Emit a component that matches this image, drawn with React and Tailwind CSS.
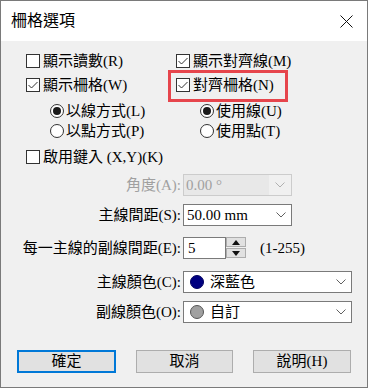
import React from 'react';

const font = { fontFamily: '"Liberation Serif", "Noto Sans CJK TC", serif' };

const Check = ({ checked }) => (
    <span className="w-[14px] h-[14px] border border-[#333] bg-white flex items-center justify-center shrink-0">
        {checked && (
            <svg width="12" height="12" viewBox="0 0 12 12">
                <path d="M1.5 6 L4.5 9 L10.5 3" fill="none" stroke="#333" strokeWidth="1" />
            </svg>
        )}
    </span>
);

const Radio = ({ checked }) => (
    <span className="w-[14px] h-[14px] rounded-full border border-[#333] bg-white flex items-center justify-center shrink-0">
        {checked && <span className="w-[8px] h-[8px] rounded-full bg-[#1a1a1a]" />}
    </span>
);

const Chevron = ({ color = '#606060' }) => (
    <svg width="10" height="6" viewBox="0 0 10 6">
        <path d="M0.5 0.5 L5 5 L9.5 0.5" fill="none" stroke={color} strokeWidth="1" />
    </svg>
);

const CheckRow = ({ checked, children }) => (
    <div className="h-6 flex items-center gap-[3px]">
        <Check checked={checked} />
        <span>{children}</span>
    </div>
);

const RadioRow = ({ checked, children }) => (
    <div className="h-5 flex items-center gap-[2px] pl-[24px]">
        <Radio checked={checked} />
        <span>{children}</span>
    </div>
);

const Label = ({ children, muted }) => (
    <span className={`w-[180px] text-right ${muted ? 'text-[#a0a0a0]' : 'text-black'}`}>{children}</span>
);

const Dot = ({ color, border }) => (
    <span className="w-[14px] h-[14px] rounded-full shrink-0" style={{ background: color, border: `1px solid ${border}` }} />
);

export default function App() {
    return (
        <div className="w-[368px] h-[388px] border border-[#7a7a7a] bg-[#f0f0f0] text-[15px] text-black flex flex-col leading-none" style={font}>
            {/* title bar */}
            <div className="h-[40px] bg-white flex items-center justify-between pl-[10px] pr-[14px] shrink-0">
                <span className="text-[16px]">柵格選項</span>
                <svg width="13" height="13" viewBox="0 0 13 13">
                    <path d="M0.5 0.5 L12.5 12.5 M12.5 0.5 L0.5 12.5" stroke="#111" strokeWidth="1" />
                </svg>
            </div>

            <div className="flex flex-col pt-[8px]">
                <div className="grid grid-cols-[150px_1fr] pl-[25px]">
                    <div className="flex flex-col">
                        <CheckRow checked={false}>顯示讀數(R)</CheckRow>
                        <CheckRow checked>顯示柵格(W)</CheckRow>
                        <div className="mt-[4px]">
                            <RadioRow checked>以線方式(L)</RadioRow>
                            <RadioRow checked={false}>以點方式(P)</RadioRow>
                        </div>
                    </div>
                    <div className="flex flex-col">
                        <CheckRow checked>顯示對齊線(M)</CheckRow>
                        <div className="relative">
                            <CheckRow checked>對齊柵格(N)</CheckRow>
                            <span className="absolute left-[-8px] top-[-3px] w-[120px] h-[32px] border-[3px] border-[#e6454c]" />
                        </div>
                        <div className="mt-[4px]">
                            <RadioRow checked>使用線(U)</RadioRow>
                            <RadioRow checked={false}>使用點(T)</RadioRow>
                        </div>
                    </div>
                </div>

                <div className="pl-[25px] mt-[4px]">
                    <CheckRow checked={false}>啟用鍵入 (X,Y)(K)</CheckRow>
                </div>

                {/* angle */}
                <div className="flex items-center gap-[2px] mt-[5px]">
                    <Label muted>角度(A):</Label>
                    <div className="w-[109px] h-[22px] border border-[#cccccc] bg-[#f0f0f0] flex items-center">
                        <span className="h-full flex-1 bg-[#e8e8e8] text-[#a0a0a0] flex items-center pl-[2px]">0.00 °</span>
                        <span className="w-[22px] flex justify-center"><Chevron color="#b0b0b0" /></span>
                    </div>
                </div>

                {/* main spacing */}
                <div className="flex items-center gap-[2px] mt-[8px]">
                    <Label>主線間距(S):</Label>
                    <div className="w-[109px] h-[22px] border border-[#7a7a7a] bg-white flex items-center justify-between pl-[3px] pr-[5px]">
                        <span>50.00 mm</span>
                        <Chevron />
                    </div>
                </div>

                {/* spin */}
                <div className="flex items-center gap-[2px] mt-[11px]">
                    <Label>每一主線的副線間距(E):</Label>
                    <div className="w-[43px] h-[22px] border border-[#7a7a7a] bg-white flex items-center pl-[4px]">5</div>
                    <div className="w-[20px] h-[22px] flex flex-col gap-[1px] -ml-[2px]">
                        <span className="h-[10px] bg-[#e1e1e1] border border-[#adadad] flex items-center justify-center">
                            <svg width="8" height="5" viewBox="0 0 8 5"><path d="M0 5 L4 0 L8 5 Z" fill="#111" /></svg>
                        </span>
                        <span className="h-[10px] bg-[#e1e1e1] border border-[#adadad] flex items-center justify-center">
                            <svg width="8" height="5" viewBox="0 0 8 5"><path d="M0 0 L4 5 L8 0 Z" fill="#111" /></svg>
                        </span>
                    </div>
                    <span className="ml-[12px]">(1-255)</span>
                </div>

                {/* colors */}
                <div className="flex items-center gap-[2px] mt-[12px]">
                    <Label>主線顏色(C):</Label>
                    <div className="w-[169px] h-[22px] border border-[#7a7a7a] bg-white flex items-center pl-[6px] pr-[5px]">
                        <Dot color="#000080" border="#000060" />
                        <span className="ml-[6px] flex-1">深藍色</span>
                        <Chevron />
                    </div>
                </div>
                <div className="flex items-center gap-[2px] mt-[8px]">
                    <Label>副線顏色(O):</Label>
                    <div className="w-[169px] h-[22px] border border-[#7a7a7a] bg-white flex items-center pl-[6px] pr-[5px]">
                        <Dot color="#a0a0a0" border="#555" />
                        <span className="ml-[6px] flex-1">自訂</span>
                        <Chevron />
                    </div>
                </div>

                {/* buttons */}
                <div className="flex items-center mt-[27px] pl-[16px] gap-[20px]">
                    <button className="w-[99px] h-[23px] border-2 border-[#0078d7] bg-[#e1e1e1]">確定</button>
                    <button className="w-[97px] h-[23px] border border-[#adadad] bg-[#e1e1e1]">取消</button>
                    <button className="w-[98px] h-[23px] border border-[#adadad] bg-[#e1e1e1]">說明(H)</button>
                </div>
            </div>
        </div>
    );
}
